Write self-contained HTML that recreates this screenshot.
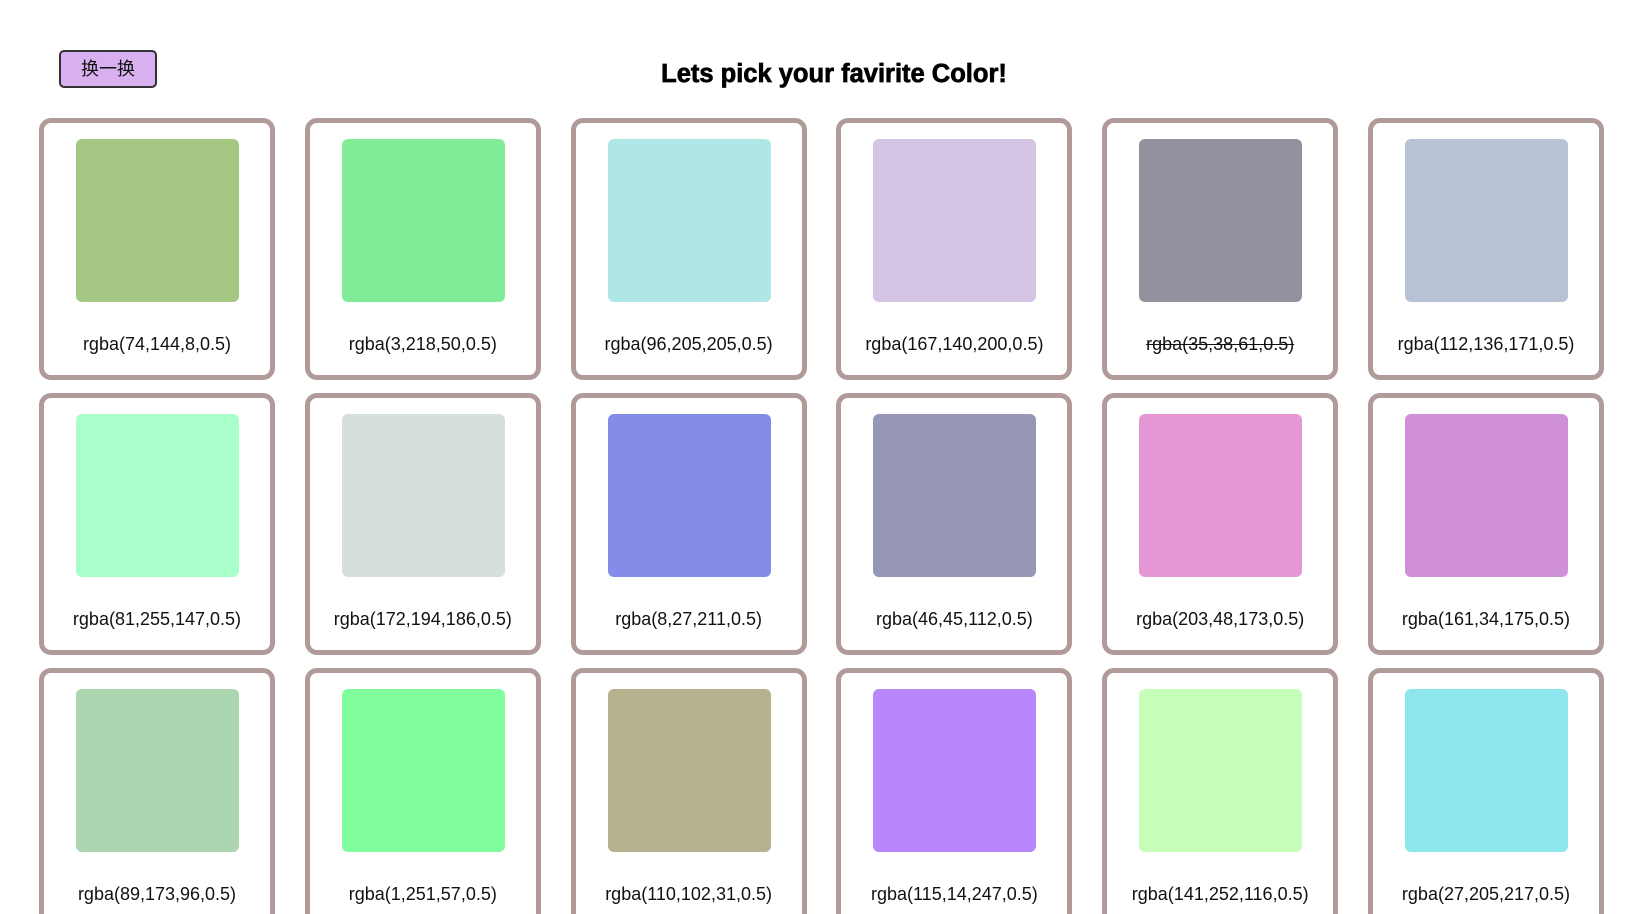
<!DOCTYPE html>
<html><head><meta charset="utf-8"><style>
html,body{margin:0;padding:0;background:#fff;width:1651px;height:914px;overflow:hidden;position:relative;font-family:"Liberation Sans","Noto Sans CJK SC",sans-serif;}
.btn{position:absolute;left:59px;top:50px;width:94px;height:34px;background:#d8b0ef;border:2px solid #333;border-radius:5px;font-size:18px;line-height:34px;text-align:center;color:#111;}
h1{position:absolute;left:0;width:1668px;top:60px;margin:0;text-align:center;font-size:25.5px;font-weight:bold;color:#000;-webkit-text-stroke:0.7px #000;}
.card{position:absolute;width:226px;height:252px;border:5px solid #b09a9a;border-radius:12px;background:#fff;}
.sw{position:absolute;left:32px;top:16px;width:163px;height:163px;border-radius:6px;}
.lb{position:absolute;left:0;right:0;top:211px;text-align:center;font-size:18px;color:#111;}
</style></head><body>
<div class="btn">换一换</div>
<h1>Lets pick your favirite Color!</h1>
<div id="g"></div>
<script>
var c=[[74,144,8],[3,218,50],[96,205,205],[167,140,200],[35,38,61],[112,136,171],[81,255,147],[172,194,186],[8,27,211],[46,45,112],[203,48,173],[161,34,175],[89,173,96],[1,251,57],[110,102,31],[115,14,247],[141,252,116],[27,205,217]];
var h='';
c.forEach(function(v,i){var col=i%6,row=Math.floor(i/6);var s='rgba('+v.join(',')+',0.5)';
h+='<div class="card" style="left:'+(39+col*265.8)+'px;top:'+(118+row*275)+'px"><div class="sw" style="background:'+s+'"></div><div class="lb"'+(i==4?' style="text-decoration:line-through"':'')+'>'+s+'</div></div>';});
document.getElementById('g').innerHTML=h;
</script>
</body></html>
